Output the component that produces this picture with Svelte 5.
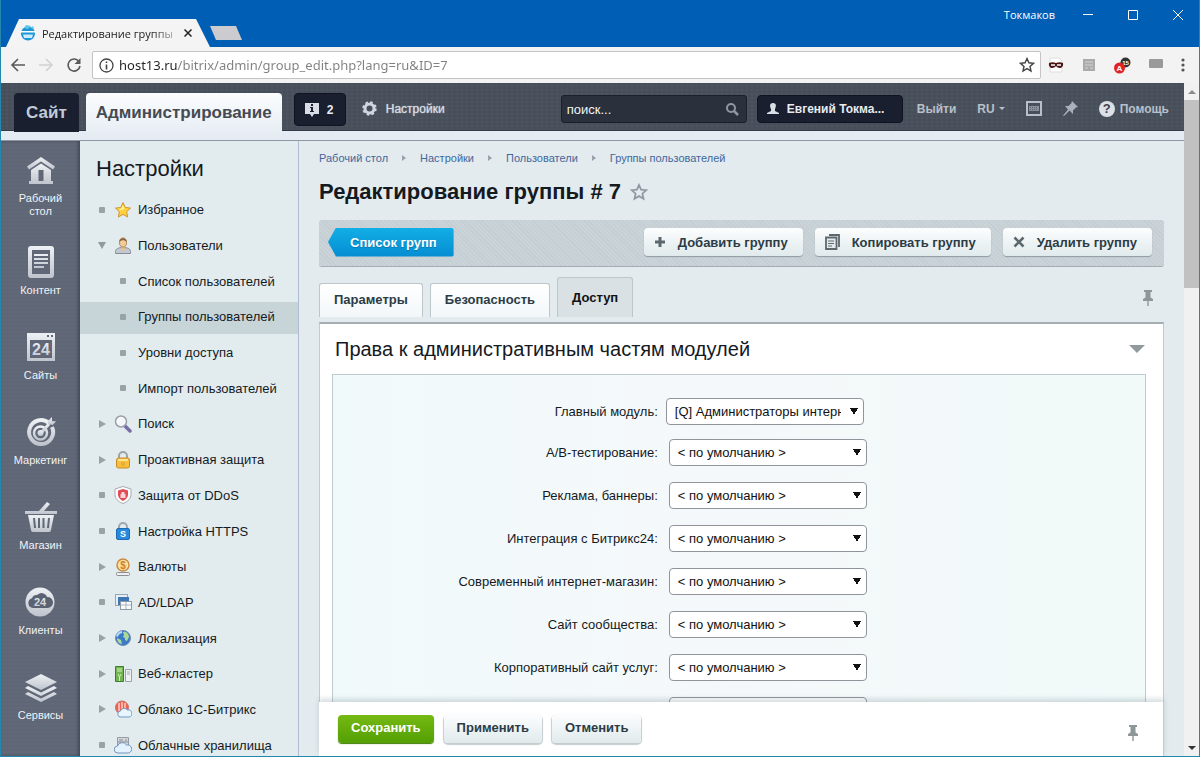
<script lang="ts">
	interface MenuItem {
		label: string;
		icon?: string;
		mark: 'dot' | 'open' | 'closed';
		sub?: boolean;
		active?: boolean;
	}

	const sections = [
		{ id: 'desktop', label: 'Рабочий стол' },
		{ id: 'content', label: 'Контент' },
		{ id: 'sites', label: 'Сайты' },
		{ id: 'marketing', label: 'Маркетинг' },
		{ id: 'shop', label: 'Магазин' },
		{ id: 'clients', label: 'Клиенты' },
		{ id: 'services', label: 'Сервисы' }
	];

	const menu: MenuItem[] = [
		{ label: 'Избранное', icon: 'star', mark: 'dot' },
		{ label: 'Пользователи', icon: 'user', mark: 'open' },
		{ label: 'Список пользователей', mark: 'dot', sub: true },
		{ label: 'Группы пользователей', mark: 'dot', sub: true, active: true },
		{ label: 'Уровни доступа', mark: 'dot', sub: true },
		{ label: 'Импорт пользователей', mark: 'dot', sub: true },
		{ label: 'Поиск', icon: 'search', mark: 'closed' },
		{ label: 'Проактивная защита', icon: 'lock', mark: 'closed' },
		{ label: 'Защита от DDoS', icon: 'shield', mark: 'dot' },
		{ label: 'Настройка HTTPS', icon: 'https', mark: 'dot' },
		{ label: 'Валюты', icon: 'coin', mark: 'closed' },
		{ label: 'AD/LDAP', icon: 'ldap', mark: 'dot' },
		{ label: 'Локализация', icon: 'globe', mark: 'closed' },
		{ label: 'Веб-кластер', icon: 'cluster', mark: 'closed' },
		{ label: 'Облако 1С-Битрикс', icon: 'cloud1c', mark: 'closed' },
		{ label: 'Облачные хранилища', icon: 'storage', mark: 'dot' }
	];

	const crumbs = ['Рабочий стол', 'Настройки', 'Пользователи', 'Группы пользователей'];
	const tabs = ['Параметры', 'Безопасность', 'Доступ'];
	let activeTab = $state('Доступ');

	const byDefault = '< по умолчанию >';
	const modules = [
		{ id: 'main', label: 'Главный модуль:', value: '[Q] Администраторы интернет-магазина' },
		{ id: 'abtest', label: 'A/B-тестирование:', value: byDefault },
		{ id: 'advertising', label: 'Реклама, баннеры:', value: byDefault },
		{ id: 'b24connector', label: 'Интеграция с Битрикс24:', value: byDefault },
		{ id: 'eshop', label: 'Современный интернет-магазин:', value: byDefault },
		{ id: 'community', label: 'Сайт сообщества:', value: byDefault },
		{ id: 'corp', label: 'Корпоративный сайт услуг:', value: byDefault },
		{ id: 'other', label: '', value: byDefault }
	];
</script>

{#snippet pushpin()}
	<svg class="pushpin" width="12" height="18" viewBox="0 0 12 18" fill="#8d9799">
		<path d="M2 1h8v2H8.500v5.500L11 10v2H1v-2l2.500-1.500V3H2z" />
		<path d="M5.300 12h1.400v5H5.300z" />
	</svg>
{/snippet}

{#snippet sectionIcon(id: string)}
	<svg width="34" height="32" viewBox="0 0 34 32" fill="url(#steel)">
		{#if id === 'desktop'}
			<path d="M17 3 3 12.500l2 3L17 7.500l12 8 2-3z" />
			<path d="M17 9.500 7 16v11H5v3h24v-3h-2V16zM14.500 16h5v11h-5z" fill-rule="evenodd" />
		{:else if id === 'content'}
			<path d="M7 0h20a3 3 0 0 1 3 3v26a3 3 0 0 1-3 3H7a3 3 0 0 1-3-3V3a3 3 0 0 1 3-3zm1 4v24h18V4z" fill-rule="evenodd" />
			<path d="M10 8h14v2H10zm0 4h14v2H10zm0 4h14v2H10zm0 4h10v2H10z" />
		{:else if id === 'sites'}
			<path d="M3 2h28v28H3zM6 9v18h22V9zM23 4v2h2V4zm4 0v2h2V4z" fill-rule="evenodd" />
			<text x="17" y="24" font-size="16">24</text>
		{:else if id === 'marketing'}
			<g fill="none" stroke="url(#steel)">
				<path d="M25 7a12 12 0 1 0 3 4" stroke-width="4" />
				<circle cx="16.500" cy="17" r="6.500" stroke-width="2.500" />
				<path d="M17 17 25 8" stroke-width="3" />
			</g>
			<circle cx="16.500" cy="17" r="3" />
			<path d="M24 8V5l4-4v4l4 .500L28.500 9z" />
		{:else if id === 'shop'}
			<path d="m15 10 8-9 3 2-6 7zM1 10h32v3H1z" />
			<path d="M4 14h26l-3 15a2 2 0 0 1-2 2H9a2 2 0 0 1-2-2zm5 3 1 10h2l-1-10zm5 0v10h2V17zm4.500 0v10h2V17zM24 17l-1 10h2l1-10z" fill-rule="evenodd" />
		{:else if id === 'clients'}
			<circle cx="16" cy="16" r="14.500" />
			<path d="M9 22a5 5 0 0 1-1-9.800A5 5 0 0 1 13 9a6 6 0 0 1 10 2 5.500 5.500 0 0 1 1 11z" fill="#5b6272" />
			<text x="16" y="20" font-size="11">24</text>
		{:else}
			<path d="m17 3 16 8-16 8L1 11z" />
			<path d="m4 15 13 6.500L30 15l3 2-16 8-16-8zm0 6 13 6.500L30 21l3 2-16 8-16-8z" />
		{/if}
	</svg>
{/snippet}

{#snippet menuIcon(name: string)}
	<svg width="18" height="18" viewBox="0 0 18 18">
		{#if name === 'star'}
			<path d="m9 1.500 2.300 5 5.200.600-3.900 3.600 1.100 5.300L9 13.400 4.300 16l1.100-5.300L1.500 7.100l5.200-.600z" fill="#ffd23c" stroke="#cf9532" />
			<path d="m9 4 1.500 3.500-3 2L4.500 8l3-.600z" fill="#fff09a" />
		{:else if name === 'user'}
			<path d="M1.500 16.500v-2c0-2.500 2.500-4 7.500-4s7.500 1.500 7.500 4v2z" fill="#c3c8ce" stroke="#878c94" />
			<path d="M7 9h4v3l-2 2-2-2z" fill="#e8bd86" />
			<ellipse cx="9" cy="5.500" rx="3.500" ry="4.500" fill="#f1cc98" stroke="#ad8455" />
			<path d="M5.500 5C5 0 13 0 12.500 5 11 2.500 7 2.500 5.500 5z" fill="#85643f" />
		{:else if name === 'search'}
			<path d="m11 11 5 5" stroke="#796da8" stroke-width="3.500" stroke-linecap="round" />
			<circle cx="7" cy="6.500" r="5.500" fill="#f5f8fb" stroke="#9c9eaa" stroke-width="1.500" />
			<path d="M3.500 6.500A3.500 3.500 0 0 1 7 3" fill="none" stroke="#fff" />
		{:else if name === 'lock'}
			<path d="M5 9V5a4 4 0 0 1 8 0v4" fill="none" stroke="#9ca2a8" stroke-width="2" />
			<rect x="2.500" y="7" width="13" height="10" rx="2" fill="#f8bf3d" stroke="#c88a24" />
			<path d="M4 9h10" stroke="#ffe48d" stroke-width="2" />
			<path d="M7 12h4m-4 2h4" stroke="#d99a2d" />
		{:else if name === 'shield'}
			<path d="M9 .500 1 3v5.500c0 4 3 7 8 9 5-2 8-5 8-9V3z" fill="#fff" stroke="#a7a9af" />
			<path d="M9 3 4 4.500v4c0 3 2 5 5 6.500 3-1.500 5-3.500 5-6.500v-4z" fill="#e04a55" />
			<path d="M6.500 8h5v4h-5zm1 0V6h3v2z" fill="#fbd6d8" />
		{:else if name === 'https'}
			<path d="M5 8V5a4 4 0 0 1 8 0v3" fill="none" stroke="#9ca8b0" stroke-width="2" />
			<rect x="2.500" y="6.500" width="13" height="11" rx="1.500" fill="#2888db" stroke="#1e6bb4" />
			<text x="9" y="15" font-size="9" fill="#fff">S</text>
		{:else if name === 'coin'}
			<rect x="2.500" y="14.500" width="13" height="3" rx="1" fill="#eee" stroke="#8b8f96" />
			<circle cx="9" cy="7" r="6" fill="#ffe0a0" stroke="#ca8c44" stroke-width="1.500" />
			<text x="9" y="11" font-size="10" fill="#c98030">$</text>
		{:else if name === 'ldap'}
			<rect x="1.500" y="1.500" width="12" height="11" fill="#e6edf5" stroke="#9aa5b3" />
			<path d="M4 4h11v8H4z" fill="#3d76b4" />
			<rect x="6.500" y="8.500" width="11" height="8" fill="#f8f9fb" stroke="#8e98a6" />
			<path d="M12 9v7m-5-4h10" stroke="#a9b5c5" />
		{:else if name === 'globe'}
			<circle cx="9" cy="9" r="7.500" fill="#3b7ac7" stroke="#6f8caf" />
			<path d="M9 3c4-1 6 3 6 5l-2 4-2-1V9L9 8l1-2zM3 9l4 2 1 4C5 15 3 12 3 9z" fill="#acd89a" />
			<path d="M3 7.500A6 6 0 0 1 8 3" stroke="#b9dcf5" stroke-width="2" fill="none" />
		{:else if name === 'cluster'}
			<path d="M1.500 1.500h8v15h-8z" fill="#71b451" stroke="#3e7c31" />
			<path d="M3 4h5M3 6h5m-4 3 1.500 3L7 9m-1.500 3v4" stroke="#d6f0b7" fill="none" />
			<path d="M11.500 4.500h6v12h-6z" fill="#eef0f2" stroke="#9da2aa" />
			<path d="M13 7h3m-3 2h3" stroke="#aaa" />
		{:else if name === 'cloud1c'}
			<circle cx="8" cy="7.500" r="6.500" fill="#ed6153" stroke="#cf6b61" />
			<path d="M5 3v8m3-9v8m3-7v5" stroke="#ffd0c4" stroke-width="1.500" />
			<path d="M7 17a3 3 0 0 1-.500-6 4 4 0 0 1 7-1 3.500 3.500 0 0 1 1.500 7z" fill="#eaf6ff" stroke="#6e9bc8" />
		{:else}
			<path d="M3.500 1.500h11v8h-11z" fill="#d5d9dd" stroke="#969ca2" />
			<path d="M5 4h4m2 0h2M4 6h10M5 8h4" stroke="#868c92" />
			<path d="M4 17a3.500 3.500 0 0 1-.500-7 5 5 0 0 1 9-1 4 4 0 0 1 2 8z" fill="#e3f2ff" stroke="#7094ba" />
		{/if}
	</svg>
{/snippet}

<svg class="defs" width="0" height="0" aria-hidden="true">
	<defs>
		<linearGradient id="steel" x1="0" y1="0" x2="0" y2="1">
			<stop offset="0" stop-color="#eef1f4" />
			<stop offset="1" stop-color="#bfc4cd" />
		</linearGradient>
	</defs>
</svg>

<div class="window">
	<div class="titlebar">
		<div class="browser-tab">
			<svg width="16" height="16" viewBox="0 0 16 16">
				<circle cx="8" cy="8.500" r="7" fill="#1d95d2" />
				<path d="M0 6h16v1.500H0z" fill="#fff" />
				<path d="M3 9.500h10l-1 3.500H4z" fill="#c9edfb" />
				<path d="m4 3 2-3 5 1-3 3zM10 3l3-2 1 3z" fill="#5cc7ec" />
			</svg>
			<span class="browser-tab-title">Редактирование группы</span>
			<button class="plain tab-close" aria-label="Закрыть вкладку">
				<svg width="8" height="8" viewBox="0 0 8 8" stroke="#222" stroke-width="1.500"><path d="m.500.500 7 7m0-7-7 7" /></svg>
			</button>
		</div>
		<button class="plain new-tab" aria-label="Новая вкладка"></button>
		<div class="window-controls">
			<span class="profile">Токмаков</span>
			<button class="plain" aria-label="Свернуть"><svg width="12" height="12" viewBox="0 0 12 12"><path d="M1 5.500h10" /></svg></button>
			<button class="plain" aria-label="Развернуть"><svg width="12" height="12" viewBox="0 0 12 12"><path d="M1.500 1.500h9v9h-9z" /></svg></button>
			<button class="plain" aria-label="Закрыть"><svg width="12" height="12" viewBox="0 0 12 12"><path d="m1 1 10 10m0-10L1 11" /></svg></button>
		</div>
	</div>

	<div class="navbar">
		<button class="plain" aria-label="Назад">
			<svg width="16" height="16" viewBox="0 0 16 16" fill="none" stroke="#5a5a5a" stroke-width="1.600"><path d="M15 8H2m6-6L2 8l6 6" /></svg>
		</button>
		<button class="plain" aria-label="Вперёд">
			<svg width="16" height="16" viewBox="0 0 16 16" fill="none" stroke="#d2d2d2" stroke-width="1.600"><path d="M1 8h13M8 2l6 6-6 6" /></svg>
		</button>
		<button class="plain" aria-label="Обновить">
			<svg width="16" height="16" viewBox="0 0 16 16" fill="none" stroke="#5a5a5a" stroke-width="1.600"><path d="M12.500 4A6 6 0 1 0 14 9" /><path d="M14.500 1v6h-6z" fill="#5a5a5a" stroke="none" /></svg>
		</button>
		<div class="address">
			<svg width="15" height="15" viewBox="0 0 15 15" fill="none" stroke="#444" stroke-width="1.300"><circle cx="7.500" cy="7.500" r="6.500" /><path d="M7.500 6.500v5m0-8v1.500" stroke-width="1.600" /></svg>
			<input type="text" aria-label="Адрес" value="host13.ru/bitrix/admin/group_edit.php?lang=ru&ID=7" />
			<svg width="16" height="16" viewBox="0 0 16 16" fill="none" stroke="#444" stroke-width="1.400"><path d="m8 1.500 1.900 4.300 4.600.500-3.500 3.100 1 4.600L8 11.600 4 14l1-4.600L1.500 6.300l4.600-.500z" /></svg>
		</div>
		<div class="extensions">
			<svg width="16" height="16" viewBox="0 0 16 16"><path d="M2 1h9l3 3v11H2z" fill="#fff" stroke="#ddd" /><path d="M1 6c2-1 5-1 7 0 2-1 5-1 7 0 1 6-5 6-7 3-2 3-8 3-7-3z" fill="#4b1717" /><path d="M3 8h4m2 0h4" stroke="#fff" stroke-width="1.500" /></svg>
			<svg width="14" height="14" viewBox="0 0 14 14"><path d="M1 1h12v12H1z" fill="#aaa" /><path d="M3 4h8M3 7h8m-8 3h3m2 0h3" stroke="#d5d5d5" /></svg>
			<svg width="17" height="17" viewBox="0 0 17 17"><circle cx="11.500" cy="5.500" r="5" fill="#333" /><text x="11.500" y="8" font-size="6" fill="#fff">15</text><circle cx="5.500" cy="11" r="5.500" fill="#e12224" /><text x="5.500" y="14" font-size="8" fill="#fff">A</text></svg>
			<svg width="14" height="14" viewBox="0 0 14 14"><rect x="0" y="1" width="14" height="9" rx="1" fill="#9a9a9a" /></svg>
			<svg width="4" height="14" viewBox="0 0 4 14" fill="#555"><circle cx="2" cy="2" r="1.600" /><circle cx="2" cy="7" r="1.600" /><circle cx="2" cy="12" r="1.600" /></svg>
		</div>
	</div>

	<div class="viewport">
		<div class="page">
			<header class="header">
				<a class="mode" href="#site">Сайт</a>
				<a class="mode mode-admin" href="#admin">Администрирование</a>
				<button class="notices" aria-label="Уведомления">
					<svg width="14" height="14" viewBox="0 0 14 14"><path d="M0 0h14v11H9l-2 3-2-3H0z" fill="#d8dde6" /><path d="M5 4h3v4h1v1H5V8h1V5H5zm1-3h2v2H6z" fill="#1b2131" /></svg>
					2
				</button>
				<a class="settings" href="#settings">
					<svg width="15" height="15" viewBox="0 0 15 15" fill="none" stroke="#d0d6df"><circle cx="7.500" cy="7.500" r="4.500" stroke-width="3" /><circle cx="7.500" cy="7.500" r="6.200" stroke-width="2" stroke-dasharray="2.600 2.260" /></svg>
					Настройки
				</a>
				<div class="search">
					<input type="text" placeholder="поиск..." aria-label="поиск..." />
					<svg width="14" height="14" viewBox="0 0 14 14" fill="none" stroke="#8f97a1" stroke-width="2"><circle cx="6" cy="6" r="4" /><path d="m9 9 4 4" stroke-width="2.500" /></svg>
				</div>
				<button class="account">
					<svg width="12" height="12" viewBox="0 0 12 12" fill="#d8dde6"><path d="M6 0c4 0 3 4 2 6v2l4 2v1H0v-1l4-2V6C3 4 2 0 6 0z" /></svg>
					Евгений Токма...
				</button>
				<a class="tool" href="#logout">Выйти</a>
				<button class="plain tool lang">RU<span class="caret"></span></button>
				<button class="plain tool" aria-label="Горячие клавиши">
					<svg width="16" height="15" viewBox="0 0 16 15"><path d="M1 1h14v13H1z" fill="none" stroke="#b8bfc9" stroke-width="2" /><path d="M3 5h10v5H3z" fill="#8a929d" /><path d="M4 6.500h8m-8 2h8" stroke="#5b636e" stroke-dasharray="1 1" /></svg>
				</button>
				<button class="plain tool" aria-label="Закрепить">
					<svg width="15" height="15" viewBox="0 0 15 15" fill="#a9b1bb"><path d="m9 0 6 6-2 .500-3 3L10 13 6.500 9.500 1 15l-1-.500L5 8.500 2 5l3.500 0 3-3z" /></svg>
				</button>
				<a class="tool help" href="#help">
					<span class="help-mark">?</span>
					Помощь
				</a>
			</header>

			<div class="body">
				<nav class="rail">
					{#each sections as section}
						<a href="#{section.id}">
							{@render sectionIcon(section.id)}
							<span>{section.label}</span>
						</a>
					{/each}
				</nav>

				<aside class="sidebar">
					<h2>Настройки</h2>
					<ul>
						{#each menu as item}
							<li class:sub={item.sub} class:active={item.active}>
								<span class="mark {item.mark}"></span>
								{#if item.icon}
									{@render menuIcon(item.icon)}
								{/if}
								<a href="#menu">{item.label}</a>
							</li>
						{/each}
					</ul>
				</aside>

				<main>
					<nav class="crumbs">
						{#each crumbs as crumb, i}
							{#if i > 0}<span class="crumb-arrow"></span>{/if}
							<a href="#crumb">{crumb}</a>
						{/each}
					</nav>

					<div class="page-title">
						<h1>Редактирование группы # 7</h1>
						<svg width="18" height="18" viewBox="0 0 18 18" fill="none" stroke="#9299a3" stroke-width="1.800"><path d="m9 2 2.100 4.700 5.100.500-3.800 3.500 1.100 5L9 13.100l-4.500 2.600 1.100-5L1.800 7.200l5.100-.500z" /></svg>
					</div>

					<div class="toolbar">
						<a class="back" href="#list">Список групп</a>
						<button class="btn">
							<svg width="12" height="12" viewBox="0 0 12 12"><path d="M6 1v10M1 6h10" stroke="#5c686d" stroke-width="3" /></svg>
							Добавить группу
						</button>
						<button class="btn">
							<svg width="15" height="16" viewBox="0 0 15 16" fill="none" stroke="#5c686d" stroke-width="1.800"><path d="M4 1h10v12" /><path d="M1 3.500h10.500V15H1z" fill="#e5ebed" /><path d="M3 7h6M3 9.500h6M3 12h4" stroke-width="1" /></svg>
							Копировать группу
						</button>
						<button class="btn">
							<svg width="12" height="12" viewBox="0 0 12 12"><path d="m1.500 1.500 9 9m0-9-9 9" stroke="#5c686d" stroke-width="2.600" /></svg>
							Удалить группу
						</button>
					</div>

					<div class="tabs">
						{#each tabs as tab}
							<button class="tab" class:current={tab === activeTab} onclick={() => (activeTab = tab)}>{tab}</button>
						{/each}
						{@render pushpin()}
					</div>

					<section class="panel">
						<div class="panel-head">
							<h2>Права к административным частям модулей</h2>
							<span class="collapse"></span>
						</div>
						<div class="rights">
							{#each modules as module, i}
								<div class="right-row" class:primary={i === 0}>
									<label for={module.id}>{module.label}</label>
									<select id={module.id}>
										<option>{module.value}</option>
									</select>
								</div>
							{/each}
						</div>
					</section>

					<footer class="actions">
						<button class="btn save">Сохранить</button>
						<button class="btn">Применить</button>
						<button class="btn">Отменить</button>
						{@render pushpin()}
					</footer>
				</main>
			</div>
		</div>

		<div class="scrollbar">
			<span class="scroll-arrow up"></span>
			<span class="thumb"></span>
			<span class="scroll-arrow down"></span>
		</div>
	</div>
</div>

<style>
	:global(body) {
		margin: 0;
		overflow: hidden;
	}

	.window {
		height: 100vh;
		box-sizing: border-box;
		display: flex;
		flex-direction: column;
		border: solid #2487ad;
		border-width: 0 1px 1px;
		font-family: "Liberation Sans", Arial, sans-serif;
		color: #151a1f;
	}

	.defs {
		position: absolute;
	}

	svg {
		flex: none;
		display: block;
	}

	svg text {
		font-family: "Liberation Sans", Arial, sans-serif;
		font-weight: bold;
		text-anchor: middle;
	}

	a {
		text-decoration: none;
		color: inherit;
	}

	h1, h2, ul {
		margin: 0;
		padding: 0;
	}

	button, input, select {
		font-family: inherit;
	}

	.plain {
		padding: 0;
		border: none;
		background: none;
		display: flex;
	}

	/* browser chrome */
	.titlebar {
		flex: none;
		height: 47px;
		background: #005eb4;
		display: flex;
		align-items: flex-end;
		font-family: "Open Sans", "Noto Sans", sans-serif;
	}

	.browser-tab {
		box-sizing: border-box;
		width: 204px;
		height: 28px;
		margin-left: 5px;
		padding: 0 18px 0 14px;
		display: flex;
		align-items: center;
		gap: 6px;
		background: #f4f4f4;
		clip-path: polygon(13px 0, 190px 0, 204px 100%, 0 100%);
	}

	.browser-tab-title {
		flex: 1;
		white-space: nowrap;
		font-size: 11px;
		color: #222;
		mask-image: linear-gradient(90deg, #000 80%, rgba(0, 0, 0, 0.2));
	}

	.new-tab {
		width: 32px;
		height: 14px;
		margin-bottom: 7px;
		background: #ccccd0;
		clip-path: polygon(0 0, 26px 0, 100% 100%, 6px 100%);
	}

	.window-controls {
		align-self: flex-start;
		margin-left: auto;
		padding: 6px 15px;
		display: flex;
		align-items: center;
		gap: 33px;
		color: #fff;
	}

	.window-controls svg {
		fill: none;
		stroke: #fff;
	}

	.profile {
		font-size: 11px;
		line-height: 18px;
		margin-right: -6px;
	}

	.navbar {
		flex: none;
		height: 36px;
		padding: 0 14px 0 9px;
		display: flex;
		align-items: center;
		gap: 12px;
		background: #f3f3f3;
		box-sizing: border-box;
	}

	.address {
		flex: 1;
		height: 26px;
		padding: 0 5px 0 6px;
		display: flex;
		align-items: center;
		gap: 5px;
		background: #fff;
		border: 1px solid #c4c4c4;
		border-radius: 2px;
		margin-left: -2px;
	}

	.address input {
		flex: 1;
		min-width: 0;
		padding: 0;
		border: none;
		outline: none;
		font-family: "Noto Sans", "Open Sans", sans-serif;
		font-size: 13px;
		line-height: 22px;
		color: transparent;
		background: linear-gradient(90deg, #222 59px, #808080 59px);
		background-clip: text;
	}

	.extensions {
		display: flex;
		align-items: center;
		gap: 18px;
		margin-left: -5px;
	}

	.viewport {
		flex: 1;
		min-height: 0;
		display: flex;
	}

	.page {
		flex: 1;
		min-width: 0;
		display: flex;
		flex-direction: column;
		background: #e3ebef;
	}

	.scrollbar {
		flex: none;
		width: 15px;
		display: flex;
		flex-direction: column;
		align-items: center;
		background: #f1f1f1;
	}

	.scroll-arrow {
		margin: 7px 0 6px;
		border: 4px solid transparent;
		border-top: none;
		border-bottom-color: #8a8a8a;
	}

	.scroll-arrow.down {
		margin-top: auto;
		border-top: 4px solid #333;
		border-bottom: none;
	}

	.thumb {
		width: 100%;
		height: 28%;
		background: #c1c1c1;
	}

	/* admin header */
	.header {
		flex: none;
		height: 58px;
		box-sizing: border-box;
		padding: 10px 15px 0 13px;
		display: flex;
		align-items: flex-start;
		background:
			linear-gradient(#e4ebf2, #e4ebf2) 0 48px / 100% 9px no-repeat,
			linear-gradient(#343b46, #343b46) 0 47px / 100% 1px no-repeat,
			repeating-linear-gradient(90deg, rgba(255, 255, 255, 0.02) 0 2px, transparent 2px 5px),
			repeating-linear-gradient(#464e59 0 2px, #49515c 2px 4px);
		border-bottom: 1px solid #8d98a3;
		color: #bdc4ce;
		font-size: 12px;
		font-weight: bold;
	}

	.mode {
		box-sizing: border-box;
		height: 39px;
		padding: 0 12px;
		font-size: 17px;
		line-height: 40px;
		color: #c3cbd7;
		background: #191f2f;
		border-radius: 4px 4px 0 0;
	}

	.mode-admin {
		height: 46px;
		margin-left: 7px;
		padding: 0 10px;
		color: #444b54;
		background: linear-gradient(#fbfdfe, #e4ebf2);
	}

	.notices, .account {
		border: 1px solid #10141f;
		border-radius: 4px;
		background: #191f2f;
		display: flex;
		align-items: center;
		font-weight: bold;
		color: #e7ebf1;
	}

	.notices {
		height: 33px;
		width: 52px;
		margin-left: 12px;
		padding: 0 10px;
		gap: 8px;
		font-size: 12px;
	}

	.settings {
		margin-left: 16px;
		display: flex;
		align-items: center;
		gap: 9px;
		height: 31px;
		color: #d5dae1;
		font-weight: normal;
		text-shadow: 0 0 1px #d5dae1;
	}

	.search {
		box-sizing: border-box;
		width: 186px;
		height: 28px;
		margin: 2px 10px 0 auto;
		padding: 0 7px 0 5px;
		display: flex;
		align-items: center;
		background: #2a313c;
		border: 1px solid #1a1f28;
		border-radius: 3px;
	}

	.search input {
		flex: 1;
		min-width: 0;
		padding: 0;
		border: none;
		background: none;
		font-size: 13px;
		color: #fff;
	}

	.search input::placeholder {
		color: #f2f4f6;
	}

	.account {
		height: 28px;
		width: 146px;
		margin: 2px 14px 0 0;
		padding: 0 9px;
		gap: 8px;
		font-size: 12px;
		white-space: nowrap;
	}

	.tool {
		height: 31px;
		display: flex;
		align-items: center;
		margin-right: 21px;
		font-size: 12px;
		font-weight: bold;
		color: #b9c0ca;
	}

	.lang {
		gap: 4px;
	}

	.caret {
		border: 3px solid transparent;
		border-top-color: #b9c0ca;
		border-bottom: none;
	}

	.help {
		gap: 5px;
		margin-right: 0;
	}

	.help-mark {
		width: 16px;
		line-height: 16px;
		border-radius: 50%;
		background: #dde1e7;
		color: #3c434e;
		text-align: center;
		font-size: 13px;
	}

	.body {
		flex: 1;
		min-height: 0;
		display: flex;
	}

	/* icon rail */
	.rail {
		flex: none;
		width: 79px;
		padding-top: 13px;
		box-sizing: border-box;
		overflow: hidden;
		background: repeating-linear-gradient(#5f6676 0 2px, #616878 2px 4px);
		box-shadow: inset -2px 0 3px rgba(40, 46, 60, 0.5);
	}

	.rail a {
		box-sizing: border-box;
		min-height: 85px;
		padding: 0 14px 28px;
		display: flex;
		flex-direction: column;
		align-items: center;
		gap: 6px;
		font-size: 11px;
		line-height: 13px;
		text-align: center;
		color: #f1f3f6;
	}

	/* menu tree */
	.sidebar {
		flex: none;
		width: 219px;
		box-sizing: border-box;
		display: flex;
		flex-direction: column;
		overflow: hidden;
		background: #e2ecee;
		border-right: 1px solid #aebcd0;
	}

	.sidebar h2 {
		padding: 12px 16px 8px;
		font-size: 22px;
		line-height: 31px;
		font-weight: normal;
	}

	.sidebar ul {
		flex: 1;
		margin-bottom: -7px;
		display: flex;
		flex-direction: column;
		list-style: none;
	}

	.sidebar li {
		flex: 1;
		display: flex;
		align-items: center;
		padding-left: 16px;
		font-size: 13px;
		white-space: nowrap;
	}

	.sidebar li svg {
		margin: 0 6px 0 7px;
	}

	.sidebar li.sub {
		padding-left: 37px;
	}

	.sidebar li.sub .mark {
		margin-right: 12px;
	}

	.sidebar li.active {
		background: linear-gradient(transparent 3px, #c8d5d8 3px calc(100% - 1px), transparent calc(100% - 1px));
	}

	.mark {
		flex: none;
		width: 6px;
		height: 6px;
		margin: 0 2px 0 3px;
		border-radius: 1px;
		background: #98a3a8;
	}

	.mark.open, .mark.closed {
		width: 0;
		height: 0;
		border-radius: 0;
		background: none;
	}

	.mark.open {
		margin: 0 1px 0 2px;
		border: 4px solid transparent;
		border-top: 7px solid #8f9a9f;
		border-bottom: none;
	}

	.mark.closed {
		margin: 0 1px 0 3px;
		border: 4px solid transparent;
		border-left: 7px solid #98a3a8;
		border-right: none;
	}

	/* content */
	main {
		flex: 1;
		min-width: 0;
		display: flex;
		flex-direction: column;
		padding: 0 20px;
	}

	.crumbs {
		flex: none;
		padding-top: 9px;
		display: flex;
		align-items: center;
		gap: 14px;
		font-size: 11px;
		line-height: 16px;
		color: #42679a;
	}

	.crumb-arrow {
		border: 3px solid transparent;
		border-left: 4px solid #97a2ad;
		border-right: none;
	}

	.page-title {
		flex: none;
		margin: 11px 0 13px;
		display: flex;
		align-items: center;
		gap: 9px;
	}

	.page-title h1 {
		font-size: 22px;
		line-height: 30px;
	}

	.toolbar {
		flex: none;
		height: 47px;
		box-sizing: border-box;
		padding: 0 12px 2px 9px;
		display: flex;
		align-items: center;
		gap: 12px;
		background: repeating-linear-gradient(45deg, #c4cdd2 0 1px, #cad3d8 1px 3px);
		border-bottom: 1px solid #a3adb3;
		border-radius: 3px;
	}

	.back {
		margin-right: auto;
		padding: 0 17px 0 22px;
		font-size: 13px;
		font-weight: bold;
		line-height: 29px;
		color: #fff;
		text-shadow: 0 1px 1px #0575ad;
		background: linear-gradient(#12aee6, #058dd2);
		border-radius: 0 3px 3px 0;
		clip-path: polygon(8px 0, 100% 0, 100% 100%, 8px 100%, 0 50%);
	}

	.btn {
		height: 28px;
		padding: 0 15px 0 10px;
		display: flex;
		align-items: center;
		gap: 12px;
		border: none;
		border-radius: 4px;
		background: linear-gradient(#fcfdfe, #e0eaec);
		box-shadow: 0 1px 1px #8f9ba1;
		font-size: 13px;
		font-weight: bold;
		color: #2c3c45;
		white-space: nowrap;
	}

	.tabs {
		flex: none;
		height: 50px;
		display: flex;
		align-items: flex-end;
		gap: 7px;
		margin-bottom: 5px;
	}

	.tab {
		height: 34px;
		padding: 0 14px 3px;
		border: 1px solid #bcc6cb;
		border-bottom: none;
		border-radius: 3px 3px 0 0;
		background: linear-gradient(#fff, #f3f7f9);
		font-size: 13px;
		font-weight: bold;
		color: #2c3c45;
	}

	.tab.current {
		height: 40px;
		padding-bottom: 0;
		background: #d9e1e5;
		color: #111;
	}

	.tabs .pushpin {
		margin: 0 10px 10px auto;
	}

	.panel {
		flex: 1;
		min-height: 0;
		overflow: hidden;
		padding: 0 17px 0 12px;
		background: #fff;
		border: 1px solid #c2cccf;
		border-top: 2px solid #a5aeb1;
		border-bottom: none;
	}

	.panel-head {
		height: 50px;
		padding: 0 1px 0 3px;
		display: flex;
		align-items: center;
		justify-content: space-between;
	}

	.panel-head h2 {
		font-size: 20px;
		line-height: 22px;
		font-weight: normal;
	}

	.collapse {
		border: 8px solid transparent;
		border-top-color: #919b9d;
		border-bottom: none;
	}

	.rights {
		padding-top: 17px;
		border: 1px solid #bfcbcf;
		border-bottom: none;
		background: linear-gradient(90deg, #f1fafa, #f5f8fa 50%, #f1faf9);
	}

	.right-row {
		height: 43px;
		display: grid;
		grid-template-columns: 40% 1fr;
		align-items: center;
		column-gap: 11px;
	}

	.right-row.primary {
		height: 39px;
		column-gap: 8px;
	}

	.right-row label {
		font-size: 13px;
		text-align: right;
	}

	.right-row select {
		width: 198px;
		height: 27px;
		padding: 0 22px 1px 8px;
		appearance: none;
		border: 1px solid #8f959a;
		border-radius: 4px;
		background-color: #fff;
		background-image: linear-gradient(to bottom left, #111 50%, transparent 50%), linear-gradient(to bottom right, #111 50%, transparent 50%);
		background-size: 4px 7px;
		background-position: right 9px center, right 5px center;
		background-repeat: no-repeat;
		font-size: 13px;
		color: #111;
	}

	.actions {
		flex: none;
		height: 54px;
		box-sizing: border-box;
		padding: 0 24px 0 19px;
		display: flex;
		align-items: center;
		gap: 10px;
		background: #fff;
		box-shadow: 0 -3px 5px rgba(90, 120, 130, 0.25);
		border-right: 1px solid #c2cccf;
		position: relative;
	}

	.actions .btn {
		padding: 0 13px 3px;
		box-shadow: 0 1px 1px 1px #c5cdd1;
	}

	.actions .save {
		background: linear-gradient(#76b913, #539f04);
		box-shadow: 0 1px 1px #3f7d08;
		color: #fff;
	}

	.actions .pushpin {
		margin-left: auto;
		margin-top: 8px;
	}
</style>
